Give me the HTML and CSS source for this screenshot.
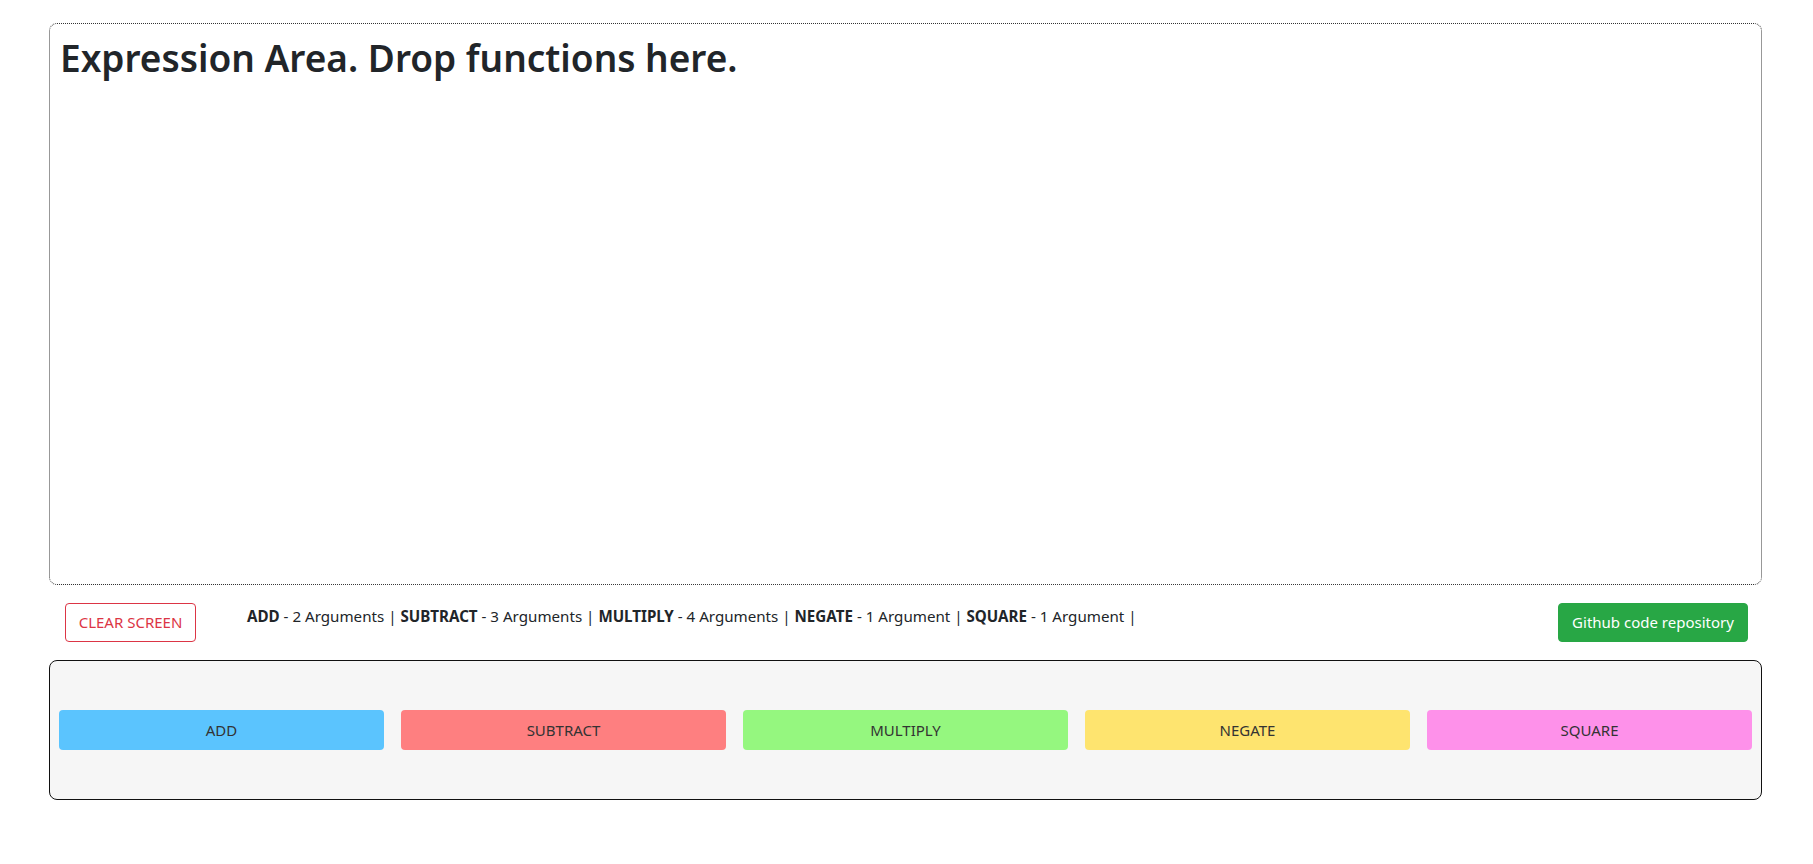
FILE: index.html
```html
<!DOCTYPE html>
<html lang="en">
<head>
<meta charset="utf-8">
<title>Expression Builder</title>
<link rel="stylesheet" href="styles.css">
</head>
<body>
<div class="app">
  <div class="expression-area">
    <h1 class="expression-title">Expression Area. Drop functions here.</h1>
  </div>
  <div class="toolbar">
    <button class="btn btn-clear">CLEAR SCREEN</button>
    <p class="info">
      <b>ADD</b> - 2 Arguments | <b>SUBTRACT</b> - 3 Arguments | <b>MULTIPLY</b> - 4 Arguments | <b>NEGATE</b> - 1 Argument | <b>SQUARE</b> - 1 Argument |
    </p>
    <button class="btn btn-github">Github code repository</button>
  </div>
  <div class="palette">
    <div class="fn fn-add">ADD</div>
    <div class="fn fn-subtract">SUBTRACT</div>
    <div class="fn fn-multiply">MULTIPLY</div>
    <div class="fn fn-negate">NEGATE</div>
    <div class="fn fn-square">SQUARE</div>
  </div>
</div>
</body>
</html>
```
FILE: styles.css
```css
* { box-sizing: border-box; }
html, body {
  margin: 0;
  background: #fff;
  color: #212529;
  font-family: "Noto Sans", "Open Sans", sans-serif;
}
.app {
  padding: 23px 51px 0 49px;
}
.expression-area {
  height: 562px;
  border: 1px dotted #333;
  border-radius: 8px;
  padding: 12px 10px;
}
.expression-title {
  margin: 0;
  font-size: 37px;
  font-weight: 600;
  line-height: 1.2;
  color: #212529;
}
.toolbar {
  display: flex;
  align-items: flex-start;
  padding: 18px 14px 0 16px;
}
.btn {
  font-family: inherit;
  font-size: 15px;
  line-height: 1.5;
  border-radius: 4px;
  height: 39px;
  padding: 0 10px;
  cursor: pointer;
}
.btn-clear {
  width: 131px;
  background: #fff;
  color: #dc3545;
  border: 1px solid #dc3545;
}
.info {
  flex: 1;
  margin: 2px 0 0 51px;
  font-size: 15.15px;
  line-height: 22px;
  color: #212529;
}
.info b { font-weight: 700; }
.btn-github {
  width: 190px;
  background: #28a745;
  border: 1px solid #28a745;
  color: #fff;
  font-size: 15px;
}
.palette {
  margin-top: 18px;
  height: 140px;
  background: #f6f6f6;
  border: 1px solid #111;
  border-radius: 8px;
  display: flex;
  align-items: center;
  gap: 17px;
  padding: 0 9px;
}
.fn {
  flex: 1;
  height: 40px;
  border-radius: 4px;
  display: flex;
  align-items: center;
  justify-content: center;
  font-size: 15px;
  color: #333;
}
.fn-add { background: #5bc4fe; }
.fn-subtract { background: #fe7f80; }
.fn-multiply { background: #95f77f; }
.fn-negate { background: #fee46f; }
.fn-square { background: #fe91ea; }
```
